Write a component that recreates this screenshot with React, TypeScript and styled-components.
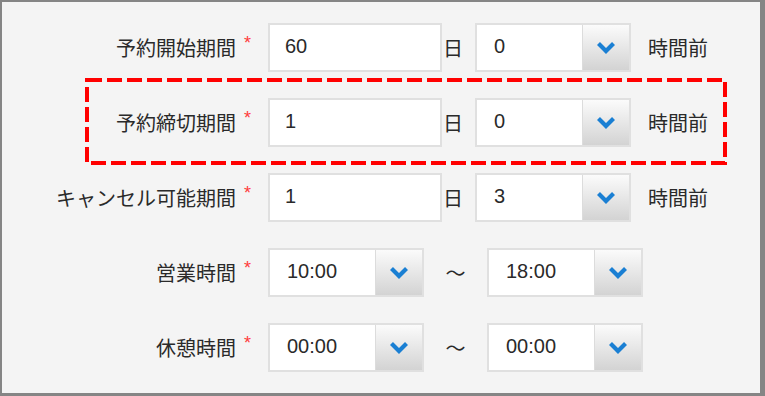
import styled, { createGlobalStyle } from 'styled-components';

const GlobalStyle = createGlobalStyle`
  html, body {
    margin: 0;
    padding: 0;
    background: #f4f4f4;
  }
  body {
    font-family: "Liberation Sans", "Noto Sans CJK JP", sans-serif;
  }
`;

const Frame = styled.div`
  box-sizing: border-box;
  width: 765px;
  height: 396px;
  background: #f4f4f4;
  border: 2px solid #858585;
  border-right-width: 5px;
  border-bottom-width: 3px;
  padding-top: 21px;
  color: #2a2a2a;
  font-size: 20px;
`;

const Form = styled.div`
  display: flex;
  flex-direction: column;
  gap: 26px;
`;

const Row = styled.div`
  display: flex;
  align-items: center;
  height: 49px;
`;

const Highlight = styled.div`
  position: relative;
`;

const HighlightBox = styled.svg`
  position: absolute;
  left: 83px;
  top: -20px;
  width: 642px;
  height: 87px;
  pointer-events: none;
`;

const Label = styled.div`
  box-sizing: border-box;
  width: 266px;
  height: 100%;
  display: flex;
  justify-content: flex-end;
  align-items: center;
  padding-right: 17px;
  white-space: nowrap;
`;

const Required = styled.span`
  align-self: flex-start;
  margin-top: 11px;
  margin-left: 8px;
  color: #ff3b3b;
  font-size: 18px;
  line-height: 1;
`;

const Field = styled.div`
  box-sizing: border-box;
  width: 174px;
  height: 49px;
  background: #fff;
  border: 2px solid #e0e0e0;
  display: flex;
  align-items: center;
  padding-left: 15px;
  padding-bottom: 2px;
`;

const Unit = styled.span`
  margin: 0 12px 0 1px;
`;

const Select = styled.div`
  box-sizing: border-box;
  width: 156px;
  height: 49px;
  background: #fff;
  border: 2px solid #e0e0e0;
  display: flex;
`;

const SelectValue = styled.div`
  flex: 1;
  display: flex;
  align-items: center;
  padding-left: 17px;
  padding-bottom: 2px;
`;

const SelectButton = styled.div`
  width: 46px;
  border-left: 1px solid #dcdcdc;
  background: linear-gradient(#fbfbfb, #d3d3d3);
  display: flex;
  align-items: center;
  justify-content: center;
  padding-bottom: 1px;
`;

const Suffix = styled.span`
  margin-left: 17px;
`;

const Tilde = styled.span`
  width: 63px;
  text-align: center;
`;

const Chevron = () => (
  <svg width="20" height="13" viewBox="0 0 20 13">
    <polyline points="2.5,2.5 10,10 17.5,2.5" fill="none" stroke="#1a7fd3" strokeWidth="4.2" />
  </svg>
);

const Dropdown = ({ value }: { value: string }) => (
  <Select>
    <SelectValue>{value}</SelectValue>
    <SelectButton>
      <Chevron />
    </SelectButton>
  </Select>
);

type PeriodRowProps = { label: string; days: string; hours: string };

const PeriodRow = ({ label, days, hours }: PeriodRowProps) => (
  <Row>
    <Label>
      {label}
      <Required>*</Required>
    </Label>
    <Field>{days}</Field>
    <Unit>日</Unit>
    <Dropdown value={hours} />
    <Suffix>時間前</Suffix>
  </Row>
);

type TimeRowProps = { label: string; from: string; to: string };

const TimeRow = ({ label, from, to }: TimeRowProps) => (
  <Row>
    <Label>
      {label}
      <Required>*</Required>
    </Label>
    <Dropdown value={from} />
    <Tilde>〜</Tilde>
    <Dropdown value={to} />
  </Row>
);

export default function App() {
  return (
    <>
      <GlobalStyle />
      <Frame>
        <Form>
          <PeriodRow label="予約開始期間" days="60" hours="0" />
          <Highlight>
            <PeriodRow label="予約締切期間" days="1" hours="0" />
            <HighlightBox viewBox="0 0 642 87">
              <rect
                x="2"
                y="2"
                width="638"
                height="83"
                fill="none"
                stroke="#ff0000"
                strokeWidth="4"
                strokeDasharray="15 5"
              />
            </HighlightBox>
          </Highlight>
          <PeriodRow label="キャンセル可能期間" days="1" hours="3" />
          <TimeRow label="営業時間" from="10:00" to="18:00" />
          <TimeRow label="休憩時間" from="00:00" to="00:00" />
        </Form>
      </Frame>
    </>
  );
}
